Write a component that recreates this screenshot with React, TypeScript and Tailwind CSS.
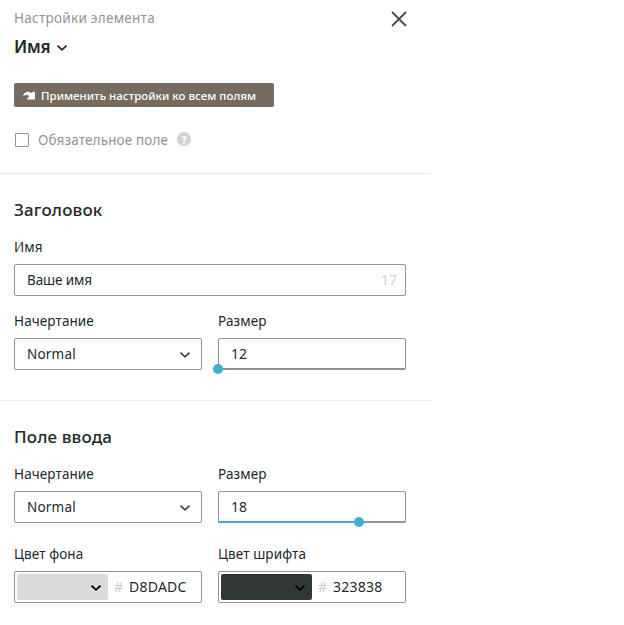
import { ReactNode } from "react";

function Chevron({ className }: { className: string }) {
  return (
    <svg
      width="12"
      height="8"
      viewBox="0 0 12 8"
      fill="none"
      stroke="currentColor"
      strokeWidth="1.8"
      className={className}
    >
      <path d="M1.5 1.7 L6 5.8 L10.5 1.7" />
    </svg>
  );
}

function Field({ label, children }: { label: ReactNode; children: ReactNode }) {
  return (
    <div className="min-w-0 flex-1">
      <div className="mb-[7px] h-5 text-[13.5px] leading-5 tracking-[0.1px] whitespace-nowrap">
        {label}
      </div>
      {children}
    </div>
  );
}

function WeightSelect() {
  return (
    <div className="flex h-8 items-center justify-between rounded-[2px] border border-[#8f9596] pr-2.5 pl-3 text-[13.5px]">
      <span className="tracking-[0.2px]">Normal</span>
      <Chevron className="mt-0.5 text-[#3f4648]" />
    </div>
  );
}

function SizeSlider({ value, offset }: { value: number; offset: number }) {
  return (
    <div className="relative flex h-8 items-center rounded-[2px] border border-b-2 border-[#8f9596] pl-3 text-[14px]">
      <span>{value}</span>
      <div
        className="absolute -bottom-[2px] -left-px h-[2px] bg-[#3eaecd]"
        style={{ width: offset }}
      />
      <div
        className="absolute -bottom-1.5 size-2.5 rounded-full bg-[#3eaecd]"
        style={{ left: offset - 6 }}
      />
    </div>
  );
}

function ColorInput({ hex }: { hex: string }) {
  return (
    <div className="flex h-8 items-center rounded-[2px] border border-[#8f9596] pl-0.5 text-[14px]">
      <div
        className="flex h-[26px] w-[91px] items-center justify-end rounded-[2px] pr-[6px]"
        style={{ backgroundColor: `#${hex}` }}
      >
        <Chevron className="mt-px text-black" />
      </div>
      <span className="mb-0.5 ml-1.5 w-[15px] text-[#c9cbcc]">#</span>
      <span className="mb-0.5 tracking-[0.25px]">{hex}</span>
    </div>
  );
}

export default function App() {
  return (
    <div className="h-[625px] overflow-hidden bg-white font-['Noto_Sans',sans-serif] text-[#22292b]">
      <div className="w-[431px]">
        <header className="h-[174px] border-b border-[#ededed] pt-2 pr-6 pl-3.5">
          <div className="flex justify-between">
            <div className="text-[13.5px] leading-5 tracking-[0.27px] text-[#8f9596]">
              Настройки элемента
            </div>
            <svg
              width="16"
              height="16"
              viewBox="0 0 16 16"
              stroke="#464c4f"
              strokeWidth="1.8"
              className="mt-[3px]"
            >
              <path d="M1 1 L15 15 M15 1 L1 15" />
            </svg>
          </div>
          <div className="mt-[7px] flex h-6 items-center gap-1.5">
            <span className="text-[17px] font-semibold tracking-[-0.3px]">Имя</span>
            <Chevron className="mt-px text-[#22292b]" />
          </div>
          <button className="mt-6 flex h-6 w-[260px] items-center rounded-[2px] bg-[#766b5e] pl-[9px] text-[11.5px] font-medium whitespace-nowrap text-white">
            <svg width="12" height="9" viewBox="0 0 12 9" fill="white" className="mt-px mr-1.5">
              <path d="M0 5.8 C0.5 2.3 2.8 0.6 5.2 0.8 C6.6 0.9 7.6 1.4 8.6 2.2 L10 0.8 H12 V8.5 H4.4 V7.3 L6.2 5.4 C5 3.5 1.9 3.2 0 5.8 Z" />
            </svg>
            <span className="mt-0.5 tracking-[0.02px]">
              Применить настройки ко всем полям
            </span>
          </button>
          <div className="mt-[23px] flex h-5 items-center pl-px">
            <span className="mr-[9px] size-3.5 rounded-[1px] border border-[#8f9596]" />
            <span className="w-[130px] text-[13.5px] tracking-[0.15px] whitespace-nowrap text-[#8f9596]">
              Обязательное поле
            </span>
            <span className="mb-0.5 ml-[9px] flex size-[14px] items-center justify-center rounded-full bg-[#d2d2d2] text-[11px] leading-none font-bold text-white">
              ?
            </span>
          </div>
        </header>

        <section className="h-[227px] border-b border-[#ededed] pt-6 pr-[25px] pl-3.5">
          <h2 className="text-[17px] leading-6 font-medium tracking-[0.15px]">
            Заголовок
          </h2>
          <div className="mt-[15px]">
            <Field label="Имя">
              <div className="flex h-8 items-center justify-between rounded-[2px] border border-[#8f9596] pr-2 pl-3 text-[13.5px]">
                <span className="tracking-[-0.1px]">Ваше имя</span>
                <span className="mb-0.5 text-[14px] text-[#d2d2d2]">17</span>
              </div>
            </Field>
          </div>
          <div className="mt-[15px] flex gap-4">
            <Field label="Начертание">
              <WeightSelect />
            </Field>
            <Field label="Размер">
              <SizeSlider value={12} offset={0} />
            </Field>
          </div>
        </section>

        <section className="pt-6 pr-[25px] pl-3.5">
          <h2 className="text-[17px] leading-6 font-medium tracking-[0.15px]">
            Поле ввода
          </h2>
          <div className="mt-[15px] flex gap-4">
            <Field label="Начертание">
              <WeightSelect />
            </Field>
            <Field label="Размер">
              <SizeSlider value={18} offset={141} />
            </Field>
          </div>
          <div className="mt-[21px] flex gap-4">
            <Field label="Цвет фона">
              <ColorInput hex="D8DADC" />
            </Field>
            <Field label="Цвет шрифта">
              <ColorInput hex="323838" />
            </Field>
          </div>
        </section>
      </div>
    </div>
  );
}
